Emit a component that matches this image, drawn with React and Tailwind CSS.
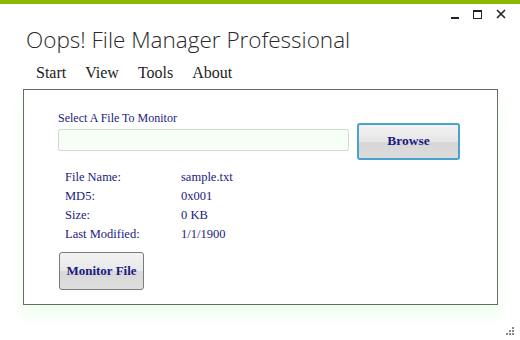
import React from "react";

const serif = { fontFamily: '"Liberation Serif", "DejaVu Serif", serif' };

const rows = [
    ["File Name:", "sample.txt"],
    ["MD5:", "0x001"],
    ["Size:", "0 KB"],
    ["Last Modified:", "1/1/1900"],
];

export default function App() {
    return (
        <div className="w-[520px] h-[340px] bg-white relative overflow-hidden">
            <div className="h-[4px] bg-[#8cb800]" />

            {/* window buttons */}
            <div className="absolute top-[9px] right-[14px] flex items-center gap-[14px] text-[#222]">
                <div className="w-[8px] h-[2px] bg-[#222] mt-[8px]" />
                <div className="w-[9px] h-[9px] border-[1.5px] border-[#222] border-t-[2px]" />
                <svg width="10" height="10" viewBox="0 0 10 10">
                    <path d="M1 1 L9 9 M9 1 L1 9" stroke="#222" strokeWidth="1.6" />
                </svg>
            </div>

            <div
                className="pl-[26px] pt-[22px] text-[22.5px] leading-[28px] font-light text-[#2a2a2a]"
                style={{ fontFamily: '"Open Sans", "Noto Sans", sans-serif' }}
            >
                Oops! File Manager Professional
            </div>

            <div className="flex gap-[19px] pl-[36px] pt-[10px] text-[16px] leading-[18px] text-[#222]" style={serif}>
                <span>Start</span>
                <span>View</span>
                <span>Tools</span>
                <span>About</span>
            </div>

            <div className="mt-[7px] ml-[23px] w-[475px] h-[216px] border border-[#6a6a6a] bg-white shadow-[0_10px_14px_rgba(200,255,200,0.35)] pl-[34px] pt-[21px] text-[#1a1a80]" style={serif}>
                <div className="text-[12px] leading-[14px]">Select A File To Monitor</div>
                <div className="flex items-start gap-[8px] mt-[-2px]">
                    <div className="mt-[6px] w-[291px] h-[22px] bg-[#f5fff3] border border-[#d4d8d4] rounded-[2px]" />
                    <button className="w-[103px] h-[37px] rounded-[3px] border-2 border-[#4aa3cc] bg-[linear-gradient(#f2f2f2,#e6e6e6_50%,#d6d6d6_51%,#dcdcdc)] text-[#1a1a80] font-bold text-[13.5px] whitespace-nowrap">
                        Browse
                    </button>
                </div>
                <div className="pl-[7px] mt-[10px] flex flex-col gap-[4px] text-[12.5px] leading-[15px]">
                    {rows.map(([k, v]) => (
                        <div key={k} className="flex">
                            <span className="w-[116px]">{k}</span>
                            <span>{v}</span>
                        </div>
                    ))}
                </div>
                <button className="mt-[10px] ml-[1px] w-[85px] h-[38px] rounded-[3px] border border-[#7a7a7a] bg-[linear-gradient(#f2f2f2,#e8e8e8_50%,#d8d8d8_51%,#dedede)] text-[#1a1a80] font-bold text-[13px] whitespace-nowrap">
                    Monitor File
                </button>
            </div>

            {/* resize grip */}
            <div className="absolute right-[6px] bottom-[5px] grid grid-cols-3 gap-[1px] w-[8px]">
                {[0, 0, 1, 0, 1, 1, 1, 1, 1].map((on, i) => (
                    <div key={i} className={on ? "w-[2px] h-[2px] bg-[#888]" : "w-[2px] h-[2px]"} />
                ))}
            </div>
        </div>
    );
}
